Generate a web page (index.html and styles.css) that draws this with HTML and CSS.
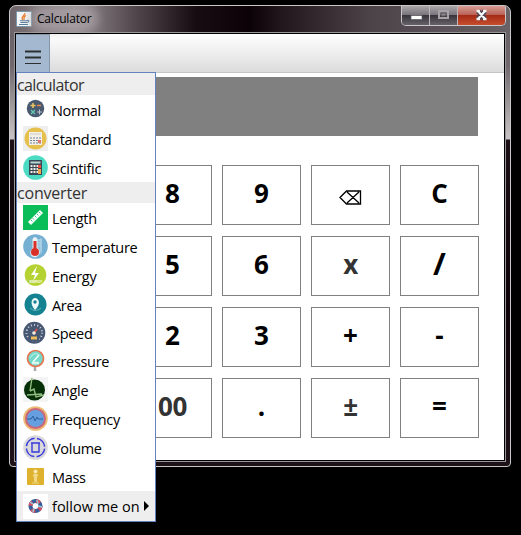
FILE: index.html
```
<!DOCTYPE html>
<html lang="en">
<head>
<meta charset="utf-8">
<title>Calculator</title>
<link rel="stylesheet" href="styles.css">
</head>
<body>
<div class="window">
  <header class="titlebar">
    <svg class="java" viewBox="0 0 16 16"><rect x=".5" y=".5" width="15" height="15" rx="1" fill="#f4f6f7" stroke="#7898ad"/><path d="M8.700 2C10 4 4 5.500 6.800 9M10 4.300c-3 1.500-1.500 2.500-2 4.500" fill="none" stroke="#ed8135" stroke-width="1.300"/><path d="M4 9.700h7M4.500 11.500h6M3 13.500h9M11 9.500c3-1 2 2-.5 2" fill="none" stroke="#557c9e" stroke-width="1.100"/></svg>
    <span class="title">Calculator</span>
    <div class="controls">
      <span class="control"><svg viewBox="0 0 27 18"><rect x="9" y="9.500" width="11" height="4" fill="#fff" stroke="#5c5965" stroke-width=".7"/></svg></span>
      <span class="control"><svg viewBox="0 0 27 18"><path d="M9 5h9v7H9z" fill="none" stroke="#a5a3a6" stroke-width="2"/><path d="M11 7h5v3h-5z" fill="#8b898c" stroke="#555258"/></svg></span>
      <span class="control close"><svg viewBox="0 0 47 18"><path d="m20 5 7 8m0-8-7 8" stroke="#4c4252" stroke-width="5"/><path d="m20 5 7 8m0-8-7 8M18.500 5h3.500m3 0h3.500M18.500 13H22m3 0h3.500" stroke="#f5f5f6" stroke-width="2.300"/></svg></span>
    </div>
  </header>
  <main class="content">
    <div class="toolbar"><button class="menu-button"><svg viewBox="0 0 16 15"><path d="M0 1.500h16M0 7.500h16" stroke="#2d3033" stroke-width="2"/><path d="M0 13.500h16" stroke="#2d3033"/></svg></button></div>
    <div class="display"></div>
    <div class="keys">
      <button></button><button>8</button><button>9</button><button><svg class="erase" viewBox="0 0 23 16"><path d="M1 7.500 7.500 1H21.500V14H7.500zM8 2l12 11M20 2 8 13" fill="none" stroke="#000" stroke-width="1.300"/></svg></button><button>C</button>
      <button></button><button>5</button><button>6</button><button class="soft">x</button><button class="slash">/</button>
      <button></button><button>2</button><button>3</button><button>+</button><button>-</button>
      <button></button><button class="soft">00</button><button>.</button><button class="soft">±</button><button>=</button>
    </div>
  </main>
</div>
<nav class="menu">
  <h2>calculator</h2>
  <div class="item"><svg viewBox="0 0 25 25"><circle cx="12.500" cy="11.500" r="8.700" fill="#495a70"/><path d="M7.500 8.500h5M10 6v5" stroke="#edc75f" stroke-width="1.500"/><path d="M14 8.500h4" stroke="#e38b4b" stroke-width="1.500"/><path d="m8 13 4 4m0-4-4 4" stroke="#64cbb0" stroke-width="1.300"/><path d="M14 15h5m-2.500-2.500v5" stroke="#b9c2cb"/></svg><span>Normal</span></div>
  <div class="item"><svg viewBox="0 0 25 25"><path fill="#eee" d="M0 0h25v25H0z"/><circle cx="12.500" cy="12.500" r="11" fill="#e5c04c"/><path fill="#f4f0e7" d="M6 6h13v13H6z"/><path d="M7 8h11" stroke="#c9cbd0"/><path d="M7 12h11M7 14.500h11M7 17h11" stroke="#7081a0" stroke-dasharray="2 1"/><path d="M15 14h3v3h-3z" fill="#dd7770"/></svg><span>Standard</span></div>
  <div class="item"><svg viewBox="0 0 25 25"><circle cx="12.500" cy="12.500" r="12.300" fill="#4bdbc3"/><path d="M6 5h13v15H6z" fill="#384857"/><path d="M7.500 6.500h10v2h-10z" fill="#b7d8d2"/><path d="M7.500 11h7.500M7.500 14h7.500M7.500 17h7.500" stroke="#f1ede1" stroke-width="2" stroke-dasharray="2 1"/><path d="M15 10h3v3h-3z" fill="#e94c3f"/><path d="M15 14h3v5h-3z" fill="#f2a64b"/></svg><span>Scintific</span></div>
  <h2>converter</h2>
  <div class="item"><svg viewBox="0 0 25 25"><path fill="#0bbd59" d="M0 0h25v25H0z"/><path d="M5 17 17 5l3 3L8 20z" fill="#fff"/><path d="m8 15 1.500 1.500m0-3.500 1.500 1.500M12 11l1.500 1.500M14 9l1.500 1.500M16 7l1.500 1.500" stroke="#0bbd59" stroke-width=".8"/></svg><span>Length</span></div>
  <div class="item"><svg viewBox="0 0 25 25"><circle cx="12.500" cy="12.500" r="12.300" fill="#75afd2"/><path d="M14 5h5v15h-5z" fill="#91bfdc"/><path d="M18 4v14M15 6h3m-3 3h3m-3 3h3" stroke="#b7d9e8"/><path d="M9.500 5q2.500-4 5 0v8.500q5 5.500-1 9.500-7 1-6-6l2-3z" fill="#e7f0f2"/><path d="M12 7v10" stroke="#d92f29" stroke-width="3"/><circle cx="12" cy="18" r="4" fill="#d92f29"/></svg><span>Temperature</span></div>
  <div class="item"><svg viewBox="0 0 25 25"><circle cx="12.500" cy="12" r="10.800" fill="#b4d333"/><path d="m14 3-6 9h4l-2 6 6-8h-4z" fill="#fff"/><text x="6.600" y="20.300" fill="#fff" class="energy">ENERGY</text></svg><span>Energy</span></div>
  <div class="item"><svg viewBox="0 0 25 25"><circle cx="12.500" cy="12.500" r="11" fill="#158291"/><path d="M12 18C6 11 9 6 12 6s7 5 0 12z" fill="#eefafa"/><circle cx="12" cy="10" r="1.700" fill="#158291"/><path d="M7 16q5 5 11 0" fill="none" stroke="#69b3ba"/></svg><span>Area</span></div>
  <div class="item short"><svg viewBox="0 0 25 25"><circle cx="11.300" cy="11.700" r="11" fill="#485873"/><circle cx="11.300" cy="11.700" r="7.800" fill="none" stroke="#ced3da" stroke-width="2" stroke-dasharray="1 2.300"/><path d="M6 18h10" stroke="#485873" stroke-width="5"/><path d="M8 17h6" stroke="#edbd59" stroke-width="3"/><path d="m11 12 3-4" stroke="#d9504d" stroke-width="2"/><circle cx="11" cy="12" r="1.800" fill="#f3eee4"/></svg><span>Speed</span></div>
  <div class="item short"><svg viewBox="0 0 25 25"><path d="M12 15v7" stroke="#a9a7aa" stroke-width="2.500"/><circle cx="12.500" cy="9.500" r="8" fill="#74d9ca" stroke="#e87550" stroke-width="1.700"/><path d="M7 9q4-7 9-3" fill="none" stroke="#c3f3e7"/><path d="m10 13 6-7" stroke="#f3fff9" stroke-width="1.400"/><path d="M9 14h7" stroke="#d9f5ed" stroke-width="2.500"/></svg><span>Pressure</span></div>
  <div class="item"><svg viewBox="0 0 25 25"><path fill="#f4f4f4" d="M0 0h25v25H0z"/><circle cx="11.500" cy="13" r="10.500" fill="#072f08"/><path d="M9 1 7 14M4 18l15-1M7 14l4-2 2 8 8-2" fill="none" stroke="#91bd81" stroke-width="1.400"/></svg><span>Angle</span></div>
  <div class="item"><svg viewBox="0 0 25 25"><circle cx="12.500" cy="12.500" r="12.300" fill="#edba75"/><circle cx="12.500" cy="12.500" r="9.500" fill="#659fdf" stroke="#c9667c" stroke-width="2"/><path d="M4 13h4l2-3 2 5 2-4 1 2h5" fill="none" stroke="#315d9b"/></svg><span>Frequency</span></div>
  <div class="item"><svg viewBox="0 0 25 25"><circle cx="12.500" cy="12.500" r="12.300" fill="#d9d9dc"/><circle cx="12.500" cy="12.500" r="9.200" fill="none" stroke="#3938db" stroke-width="1.500" stroke-dasharray="12 2.450" stroke-dashoffset="-1.200"/><path d="M9 8h7v9H9zM8 8h9" fill="none" stroke="#3938db" stroke-width="1.400"/></svg><span>Volume</span></div>
  <div class="item"><svg viewBox="0 0 25 25"><rect x="4" y="4" width="17" height="17" rx="1" fill="#deb12f"/><circle cx="12.500" cy="7.500" r="2" fill="#f8e9b5"/><path d="M10.500 10.500h4l-1 4v3h-2v-3zM9 19h7" fill="#f2d986" stroke="#f2d986"/></svg><span>Mass</span></div>
  <div class="item selected"><svg viewBox="0 0 25 25"><path fill="#fff" d="M0 0h25v25H0z"/><circle cx="12.500" cy="12" r="5" fill="none" stroke="#345f9b" stroke-width="4"/><circle cx="12.500" cy="12" r="5" fill="none" stroke="#d75062" stroke-width="4" stroke-dasharray="4 3.850"/><path d="m7 8 3 2m4-4 1 4m4 3-4-1m-5 6 1-4" stroke="#8ed2e4" stroke-width="1.300"/></svg><span>follow me on</span><i></i></div>
</nav>
</body>
</html>
```
FILE: styles.css
```
* { box-sizing: border-box; }
body { margin: 0; width: 521px; height: 535px; padding: 5px 10px 0 9px; overflow: hidden; background: #000; font-family: "Open Sans", "Noto Sans", sans-serif; }
.window {
  width: 502px; height: 462px; padding: 0 4px 4px; overflow: hidden;
  border: 1px solid #c9c6c8; border-radius: 7px 7px 4px 4px;
  background:
    linear-gradient(90deg, #6d6469 0, #938b8f 13%, #51474c 25%, #170c12 37%, #0b0207 48%, #20161b 54%, #4c4348 72%, #686166) 0 0 / 100% 27px no-repeat,
    linear-gradient(#686166 27px, #70686c 60px, #c8c4c6 133px, #1a1015 134px, #0c0207 300px, #1c1217);
}
.titlebar { height: 26px; display: flex; align-items: flex-start; padding-left: 2px; }
.java { width: 16px; height: 16px; margin-top: 5px; }
.title { margin: 4px 0 0 2px; padding: 0 3px; font-size: 12px; line-height: 17px; letter-spacing: -.2px; color: #000; background: #b1aaad90; box-shadow: 0 0 8px 5px #b1aaad90; border-radius: 9px; }
.controls { display: flex; width: 105px; height: 20px; margin-left: auto; margin-right: 0; border: 1px solid #c9c6ca; border-top: 0; border-radius: 0 0 5px 5px; overflow: hidden; }
.control { width: 28px; border-right: 1px solid #bcb8bc; background: linear-gradient(#aaa7aa, #77737a 48%, #39353d 50%, #67626a); }
.control svg { display: block; width: 27px; height: 18px; }
.close { width: 48px; border-right: 0; background: linear-gradient(#d79d94, #b96158 46%, #a52b16 50%, #c64e2d); }
.close svg { width: 47px; }
.content { width: 492px; height: 430px; border: 1px solid #99979a; outline: 1px solid #000; outline-offset: -2px; background: #fff; padding: 1px; }
.toolbar { height: 39px; border-bottom: 1px solid #c5c5c5; background: linear-gradient(#fff, #dcdcdc); }
.menu-button { display: block; width: 34px; height: 38px; padding: 0 0 0 9px; border: 1px solid #8496a8; border-width: 1px 1px 0 0; background: #a4b8cf; }
.menu-button svg { display: block; width: 16px; height: 15px; margin-top: 8px; }
.display { width: 434px; height: 59px; margin: 4px 0 0 28px; background: #808080; }
.keys { display: grid; grid-template-columns: repeat(5, 79px); grid-auto-rows: 60px; gap: 11px 10px; margin: 29px 0 0 28px; }
.keys button { display: flex; align-items: center; justify-content: center; padding: 0 0 5px; border: 1px solid #808080; background: #fff; color: #000; font: bold 26px/1 "Open Sans", sans-serif; }
.keys .soft { color: #333; letter-spacing: -.4px; }
.keys .slash { font-size: 31px; }
.erase { width: 23px; height: 16px; margin: 10px 1px 0 0; }
.menu { position: absolute; left: 16px; top: 72px; width: 140px; height: 450px; background: #fff; border: 1px solid #6382bf; }
.menu h2 { height: 22px; margin: 0; background: #eee; color: #333; font-size: 16px; line-height: 24px; font-weight: 400; letter-spacing: -.6px; }
.menu h2:not(:first-child) { height: 21px; line-height: 22px; letter-spacing: -.2px; }
.item { height: 29px; display: flex; align-items: center; padding-left: 6px; color: #000; font-size: 14.5px; line-height: 20px; letter-spacing: -.3px; white-space: nowrap; }
.item.short { height: 28px; }
.item svg { flex: none; width: 25px; height: 25px; margin-right: 4px; }
.item span { padding-top: 2px; }
.item.selected { height: 30px; background: #eee; letter-spacing: 0; }
.item i { border: 5px solid transparent; border-left-color: #000; border-right: 0; margin-left: 4px; }
.energy { font: bold 3px "Liberation Sans", sans-serif; letter-spacing: 0; }
```
